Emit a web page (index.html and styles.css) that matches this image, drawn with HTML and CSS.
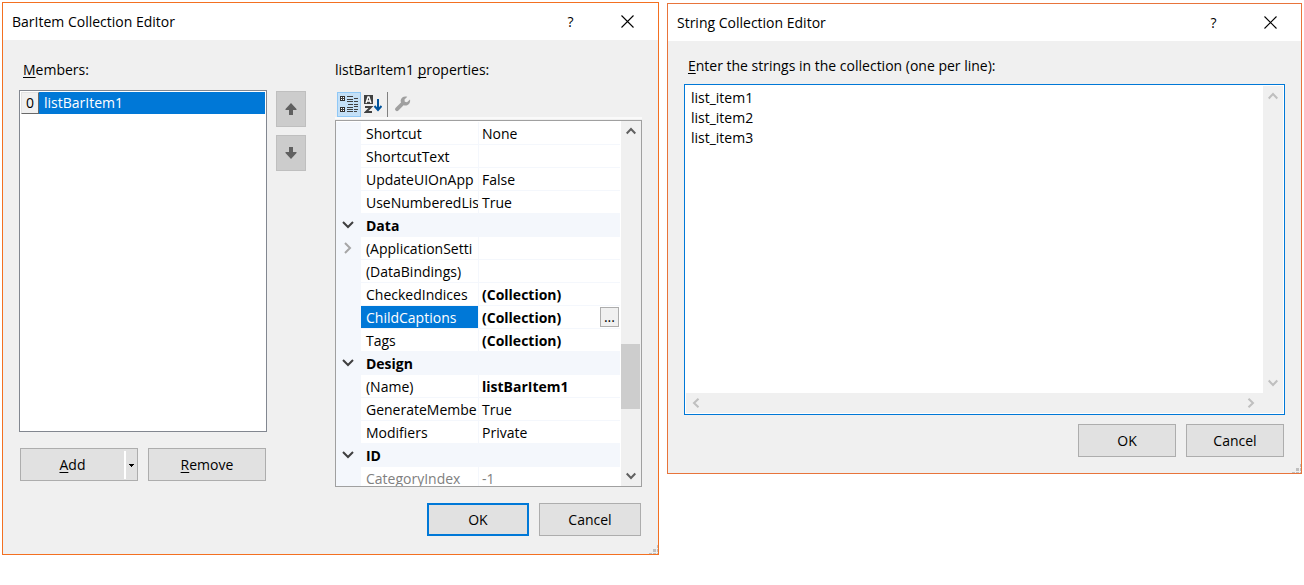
FILE: index.html
```html
<!DOCTYPE html>
<html lang="en">
<head>
<meta charset="utf-8">
<title>Collection Editors</title>
<link rel="stylesheet" href="styles.css">
</head>
<body>
<main class="desktop">
  <section class="dialog dialog-items" aria-labelledby="items-title">
    <header class="titlebar">
      <h1 class="title" id="items-title">BarItem Collection Editor</h1>
      <button class="caption-btn" type="button" aria-label="Help">?</button>
      <button class="caption-btn" type="button" aria-label="Close"><svg width="13" height="13" viewBox="0 0 13 13"><path d="M.5 .5l12 12M12.5 .5l-12 12" stroke="#000" stroke-width="1.1" fill="none"/></svg></button>
    </header>
    <div class="items-body">
      <div class="members">
        <div class="label members-label" id="members-label"><u>M</u>embers:</div>
        <ul class="listbox" role="listbox" aria-labelledby="members-label">
          <li class="member" role="option" aria-selected="true"><span class="member-index">0</span><span class="member-name">listBarItem1</span></li>
        </ul>
        <div class="member-actions">
          <div class="split">
            <button class="split-main" type="button"><u>A</u>dd</button>
            <button class="split-drop" type="button" aria-label="Add options"><svg width="5" height="3" viewBox="0 0 5 3"><path d="M0 0h5v1h-1v1h-1v1h-1v-1h-1v-1h-1z" fill="#000"/></svg></button>
          </div>
          <button class="btn" type="button"><u>R</u>emove</button>
        </div>
      </div>
      <div class="movers">
        <button class="mover" type="button" aria-label="Move up"><svg width="12" height="12" viewBox="0 0 12 12"><path d="M6 0L11.500 6V7H8V12H4V7H.5V6z" fill="#606060"/></svg></button>
        <button class="mover" type="button" aria-label="Move down"><svg width="12" height="12" viewBox="0 0 12 12"><path d="M6 12L11.500 6V5H8V0H4V5H.5V6z" fill="#606060"/></svg></button>
      </div>
      <div class="props">
        <div class="label">listBarItem1 <u class="descender">p</u>roperties:</div>
        <div class="toolbar">
          <button class="tool tool-on" type="button" aria-label="Categorized"><svg width="18" height="17" viewBox="0 0 18 17" shape-rendering="crispEdges"><path d="M0 0h5v5H0zM0 11h5v5H0z" fill="#303030"/><path d="M1 1h3v3H1zM1 12h3v3H1z" fill="#fff"/><path d="M2 1h1v3H2zM1 2h3v1H1zM2 12h1v3H2zM1 13h3v1H1zM7 0h6v1H7zM7 3h6v1H7zM7 5h6v1H7zM8 8h5v1H8zM7 11h6v1H7zM7 13h6v1H7zM7 15h6v1H7zM14 2h4v1h-4zM14 5h4v1h-4zM14 8h4v1h-4zM14 10h4v1h-4zM14 13h4v1h-4zM14 15h3v1h-3z" fill="#404040"/></svg></button>
          <button class="tool" type="button" aria-label="Alphabetical"><svg width="18" height="18" viewBox="0 0 18 18"><path d="M0 0h9v9H0z" fill="#404040"/><path d="M2 8L4 2h1l2 6M3 6h3" stroke="#fff" stroke-width="1.300" fill="none"/><path d="M1 12h6L2 17h6" stroke="#404040" stroke-width="2" fill="none"/><path d="M14 4v11M10.500 11l3.500 4 3.500-4" stroke="#00539c" stroke-width="2" fill="none"/></svg></button>
          <span class="tool-sep"></span>
          <button class="tool" type="button" aria-label="Property pages" disabled><svg width="16" height="16" viewBox="0 0 16 16"><path d="M15 3.500L12 6.200 9.800 5.800 9.500 3.500 12.300.8C9.500-.3 6.200 1 5.700 4.200c-.1.800 0 1.500.3 2.200L.7 11.800c-.9.900-.9 2 0 2.800.8.800 1.900.7 2.700-.1L8.600 9.200c3.700 1.300 7.300-1.700 6.400-5.700z" fill="#a0a0a0"/></svg></button>
        </div>
        <div class="propgrid">
          <div class="rows">
          <table class="proptable">
            <colgroup><col class="col-gutter"><col class="col-name"><col></colgroup>
            <tbody>
              <tr><td></td><th scope="row">Shortcut</th><td>None</td></tr>
              <tr><td></td><th scope="row">ShortcutText</th><td></td></tr>
              <tr><td></td><th scope="row">UpdateUIOnApp</th><td>False</td></tr>
              <tr><td></td><th scope="row">UseNumberedLis</th><td>True</td></tr>
              <tr class="category"><td><svg class="mark" width="12" height="8" viewBox="0 0 12 8"><path d="M1 1l5 5 5-5"/></svg></td><th colspan="2">Data</th></tr>
              <tr><td><svg class="mark mark-dim" width="8" height="12" viewBox="0 0 8 12"><path d="M1 1l5 5-5 5"/></svg></td><th scope="row">(ApplicationSetti</th><td></td></tr>
              <tr><td></td><th scope="row">(DataBindings)</th><td></td></tr>
              <tr><td></td><th scope="row">CheckedIndices</th><td class="set">(Collection)</td></tr>
              <tr class="selected"><td></td><th scope="row">ChildCaptions</th><td class="set"><div class="editor"><span>(Collection)</span><button class="ellipsis" type="button" aria-label="Edit ChildCaptions">...</button></div></td></tr>
              <tr><td></td><th scope="row">Tags</th><td class="set">(Collection)</td></tr>
              <tr class="category"><td><svg class="mark" width="12" height="8" viewBox="0 0 12 8"><path d="M1 1l5 5 5-5"/></svg></td><th colspan="2">Design</th></tr>
              <tr><td></td><th scope="row">(Name)</th><td class="set">listBarItem1</td></tr>
              <tr><td></td><th scope="row">GenerateMembe</th><td>True</td></tr>
              <tr><td></td><th scope="row">Modifiers</th><td>Private</td></tr>
              <tr class="category"><td><svg class="mark" width="12" height="8" viewBox="0 0 12 8"><path d="M1 1l5 5 5-5"/></svg></td><th colspan="2">ID</th></tr>
              <tr class="readonly"><td></td><th scope="row">CategoryIndex</th><td>-1</td></tr>
            </tbody>
          </table>
          </div>
          <div class="vscroll">
            <button class="scroll-btn" type="button" aria-label="Scroll up"><svg width="10" height="8" viewBox="0 0 10 8"><path d="M.7 6.500L5 2l4.300 4.500"/></svg></button>
            <div class="track"><div class="thumb"></div></div>
            <button class="scroll-btn" type="button" aria-label="Scroll down"><svg width="10" height="8" viewBox="0 0 10 8"><path d="M.7 1.500L5 6l4.300-4.500"/></svg></button>
          </div>
        </div>
      </div>
    </div>
    <footer class="actions">
      <button class="btn btn-default" type="button">OK</button>
      <button class="btn" type="button">Cancel</button>
    </footer>
    <svg class="grip" width="9" height="9" viewBox="0 0 9 9"><path d="M0 8h3v1H0zM4 8h3v1H4zM8 8h1v1H8zM4 4h3v3H4zM8 4h1v3H8zM8 0h1v3H8z" fill="#bfbfbf"/></svg>
  </section>

  <section class="dialog dialog-strings" aria-labelledby="strings-title">
    <header class="titlebar">
      <h1 class="title" id="strings-title">String Collection Editor</h1>
      <button class="caption-btn" type="button" aria-label="Help">?</button>
      <button class="caption-btn" type="button" aria-label="Close"><svg width="13" height="13" viewBox="0 0 13 13"><path d="M.5 .5l12 12M12.5 .5l-12 12" stroke="#000" stroke-width="1.1" fill="none"/></svg></button>
    </header>
    <div class="strings-body">
      <label class="label strings-label" for="strings"><u>E</u>nter the strings in the collection (one per line):</label>
      <div class="textbox">
        <textarea class="strings" id="strings" spellcheck="false">list_item1
list_item2
list_item3</textarea>
        <div class="vscroll vscroll-off">
          <button class="scroll-btn" type="button" aria-label="Scroll up" disabled><svg width="10" height="8" viewBox="0 0 10 8"><path d="M.7 6.500L5 2l4.300 4.500"/></svg></button>
          <button class="scroll-btn" type="button" aria-label="Scroll down" disabled><svg width="10" height="8" viewBox="0 0 10 8"><path d="M.7 1.500L5 6l4.300-4.500"/></svg></button>
        </div>
        <div class="hscroll">
          <button class="scroll-btn" type="button" aria-label="Scroll left" disabled><svg width="8" height="10" viewBox="0 0 8 10"><path d="M6.500 .7L2 5l4.500 4.300"/></svg></button>
          <button class="scroll-btn" type="button" aria-label="Scroll right" disabled><svg width="8" height="10" viewBox="0 0 8 10"><path d="M1.500 .7L6 5 1.500 9.300"/></svg></button>
        </div>
      </div>
    </div>
    <footer class="actions">
      <button class="btn" type="button">OK</button>
      <button class="btn" type="button">Cancel</button>
    </footer>
    <svg class="grip" width="9" height="9" viewBox="0 0 9 9"><path d="M0 8h3v1H0zM4 8h3v1H4zM8 8h1v1H8zM4 4h3v3H4zM8 4h1v3H8zM8 0h1v3H8z" fill="#bfbfbf"/></svg>
  </section>
</main>
</body>
</html>
```
FILE: styles.css
```css
* { box-sizing: border-box; }

body {
  margin: 0;
  background: #fff;
  color: #000;
  font: 14px/20px "Open Sans", "Noto Sans", sans-serif;
}

button, textarea { font: inherit; color: inherit; }

button {
  display: flex;
  align-items: center;
  justify-content: center;
  margin: 0;
  padding: 0;
  border: 0;
  background: none;
}

svg { display: block; flex: none; }

u { text-underline-offset: 2px; }
.descender { text-decoration-skip-ink: none; }

.desktop {
  display: flex;
  align-items: flex-start;
  gap: 8px;
  padding: 2px;
}

.dialog {
  position: relative;
  min-width: 0;
  border: 1px solid #f37021;
  background: #f0f0f0;
}

.dialog-items { flex: 657 1 0; }
.dialog-strings { flex: 635 1 0; margin-top: 1px; border-color: #e8743b; }

.titlebar {
  display: flex;
  height: 37px;
  padding: 0 2px 0 9px;
  background: #fff;
}

.title {
  flex: 1;
  margin: 0;
  font-size: 14px;
  font-weight: 400;
  line-height: 37px;
}

.caption-btn { width: 57px; }

/* Item collection editor */
.items-body {
  display: flex;
  padding: 20px 16px 16px;
}

.members {
  display: flex;
  flex-direction: column;
  flex: 248 1 0;
  margin-right: 9px;
  padding-bottom: 6px;
}

.members-label { padding-left: 4px; }

.listbox {
  flex: 1;
  margin: 10px 0 16px;
  padding: 1px;
  border: 1px solid #828790;
  background: #fff;
  list-style: none;
}

.member {
  display: flex;
  height: 22px;
  background: #0078d7;
  color: #fff;
}

.member-index {
  width: 18px;
  border: 1px solid;
  border-color: #e3e3e3 #696969 #696969 #e3e3e3;
  background: #f0f0f0;
  color: #000;
  text-align: center;
}

.member-name { padding-left: 5px; line-height: 22px; }

.member-actions {
  display: grid;
  grid-template-columns: 1fr 1fr;
  gap: 10px;
  padding: 0 1px;
}

.btn, .split {
  height: 33px;
  border: 1px solid #adadad;
  background: #e1e1e1;
}

.btn-default { border: 2px solid #0078d7; }

.split { display: flex; padding: 2px 0 1px; }
.split-main { flex: 1; border-right: 2px solid #fff; }
.split-drop { width: 11px; }

.movers {
  display: flex;
  flex-direction: column;
  gap: 8px;
  margin-right: 29px;
  padding-top: 31px;
}

.mover {
  width: 30px;
  height: 36px;
  border: 1px solid #bfbfbf;
  background: #ccc;
}

.props { flex: 307 1 0; min-width: 0; }

.toolbar {
  display: flex;
  align-items: center;
  height: 28px;
  margin: 11px 0 1px;
  padding-left: 2px;
  border-bottom: 2px solid #fafafa;
}

.tool { width: 24px; height: 25px; }
.tool-on { border: 1px solid #90c8f6; background: #c4e0f7; }
.tool-sep { width: 1px; height: 25px; margin: 0 3px 0 2px; background: #808080; }

.propgrid {
  display: flex;
  height: 367px;
  overflow: hidden;
  border: 1px solid #a0a0a0;
  background: #fff;
}

.rows { flex: 1; min-width: 0; padding-top: 1px; }

.proptable {
  width: 100%;
  table-layout: fixed;
  border-spacing: 0;
}

.col-gutter { width: 25px; }
.col-name { width: 118px; }

.proptable th, .proptable td {
  height: 23px;
  padding: 2px 0 0 3px;
  overflow: hidden;
  border-bottom: 1px solid #f4f7fc;
  background-clip: padding-box;
  font-weight: 400;
  line-height: 20px;
  text-align: left;
  white-space: nowrap;
}

.proptable th { padding-left: 5px; border-right: 1px solid #f4f7fc; }
.proptable td:first-child { padding: 0 0 0 6px; background: #f4f7fc; }
.proptable .category th { border-right: 0; background: #f4f7fc; font-weight: 700; }
.proptable .set { font-weight: 700; }
.proptable .selected th { background: #0078d7 padding-box; color: #fff; }
.readonly { color: #808080; }

.mark { fill: none; stroke: #404040; stroke-width: 2; }
.mark-dim { margin-left: 2px; stroke: #a6a6a6; }

.proptable .selected td { padding-top: 0; }

.editor {
  display: flex;
  justify-content: space-between;
  height: 22px;
  line-height: 24px;
}

.ellipsis {
  width: 19px;
  height: 20px;
  margin: 1px 1px 0 0;
  border: 1px solid #adadad;
  background: #f0f0f0;
  font-weight: 400;
}

.vscroll {
  display: flex;
  flex-direction: column;
  width: 20px;
  margin-left: 1px;
  background: #f0f0f0;
}

.scroll-btn { flex: none; width: 20px; height: 20px; }
.scroll-btn svg { fill: none; stroke: #606060; stroke-width: 2; }
.scroll-btn:disabled svg { stroke: #bfbfbf; }

.track { display: flex; flex-direction: column; flex: 1; padding: 203px 1px 0 0; }
.thumb { height: 65px; background: #cdcdcd; }

.actions {
  display: flex;
  justify-content: flex-end;
  gap: 10px;
  padding: 0 17px 18px;
}

.actions .btn { width: 102px; }

.grip { position: absolute; right: 0; bottom: 0; }

/* String collection editor */
.strings-body { padding: 15px 16px 9px; }

.strings-label { display: block; padding-left: 4px; }

.textbox {
  display: grid;
  grid-template: 1fr 20px / 1fr 20px;
  height: 331px;
  margin-top: 8px;
  padding: 1px;
  border: 1px solid #0078d7;
  background: #fff;
}

.strings {
  display: block;
  width: 100%;
  height: 100%;
  padding: 2px 5px;
  border: 0;
  outline: 0;
  background: #fff;
  resize: none;
}

.vscroll-off { justify-content: space-between; margin: 0; }

.hscroll {
  display: flex;
  grid-column: 1 / 3;
  justify-content: space-between;
  padding-right: 22px;
  background: #f0f0f0;
}

.dialog-strings .actions { padding-bottom: 16px; }
.dialog-strings .actions .btn { width: 98px; }
```
